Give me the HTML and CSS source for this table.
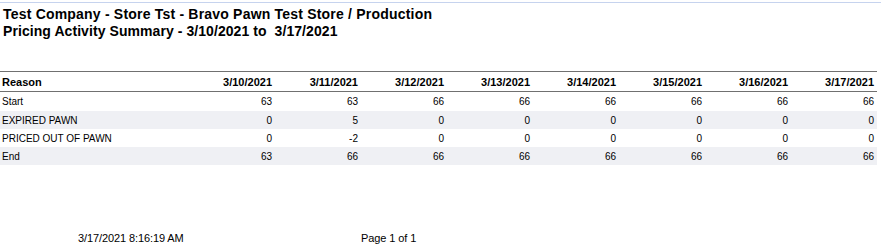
FILE: index.html
```html
<!DOCTYPE html>
<html>
<head>
<meta charset="utf-8">
<link rel="stylesheet" href="styles.css">
</head>
<body>
<div class="topline"></div>
<header class="title">
  <div class="title-main">Test Company - Store Tst - Bravo Pawn Test Store / Production</div>
  <div class="title-sub">Pricing Activity Summary - 3/10/2021 to&nbsp; 3/17/2021</div>
</header>
<table class="report">
  <colgroup>
    <col class="c-reason">
    <col class="c-day"><col class="c-day"><col class="c-day"><col class="c-day">
    <col class="c-day"><col class="c-day"><col class="c-day"><col class="c-day">
  </colgroup>
  <thead>
    <tr>
      <th class="left">Reason</th>
      <th>3/10/2021</th><th>3/11/2021</th><th>3/12/2021</th><th>3/13/2021</th>
      <th>3/14/2021</th><th>3/15/2021</th><th>3/16/2021</th><th>3/17/2021</th>
    </tr>
  </thead>
  <tbody>
    <tr>
      <td class="left">Start</td>
      <td>63</td><td>63</td><td>66</td><td>66</td><td>66</td><td>66</td><td>66</td><td>66</td>
    </tr>
    <tr class="alt">
      <td class="left">EXPIRED PAWN</td>
      <td>0</td><td>5</td><td>0</td><td>0</td><td>0</td><td>0</td><td>0</td><td>0</td>
    </tr>
    <tr>
      <td class="left">PRICED OUT OF PAWN</td>
      <td>0</td><td>-2</td><td>0</td><td>0</td><td>0</td><td>0</td><td>0</td><td>0</td>
    </tr>
    <tr class="alt">
      <td class="left">End</td>
      <td>63</td><td>66</td><td>66</td><td>66</td><td>66</td><td>66</td><td>66</td><td>66</td>
    </tr>
  </tbody>
</table>
<footer class="footer">
  <span class="stamp">3/17/2021 8:16:19 AM</span>
  <span class="page">Page 1 of 1</span>
</footer>
</body>
</html>
```

FILE: styles.css
```css
html, body {
  margin: 0;
  padding: 0;
  background: #ffffff;
  color: #000000;
  font-family: "Liberation Sans", Arial, sans-serif;
}

.topline {
  margin-top: 2px;
  height: 1px;
  background: #c6d3ee;
}

.title {
  margin-top: 3px;
  padding-left: 3px;
  font-size: 14px;
  line-height: 17px;
  font-weight: bold;
}

.title-main { letter-spacing: 0.2px; }
.title-sub { letter-spacing: 0.07px; }

.report {
  margin-top: 31px;
  width: 877px;
  table-layout: fixed;
  border-collapse: collapse;
  font-size: 10px;
}

.c-reason { width: 189px; }
.c-day { width: 86px; }

.report th,
.report td {
  padding: 0 3px 0 2px;
  text-align: right;
  white-space: nowrap;
  overflow: hidden;
}

.report .left { text-align: left; }

.report thead tr {
  border-top: 1px solid #707070;
  border-bottom: 1px solid #707070;
}

.report th {
  height: 19px;
  font-size: 11px;
  font-weight: bold;
}

.report td {
  height: 18px;
}

.report tbody tr:first-child td {
  height: 19px;
}

.report .alt {
  background: #eff0f4;
}

.footer {
  display: flex;
  margin-top: 67px;
  padding-left: 78px;
  font-size: 11px;
  line-height: 13px;
  letter-spacing: -0.1px;
}

.stamp {
  width: 283px;
}
```
